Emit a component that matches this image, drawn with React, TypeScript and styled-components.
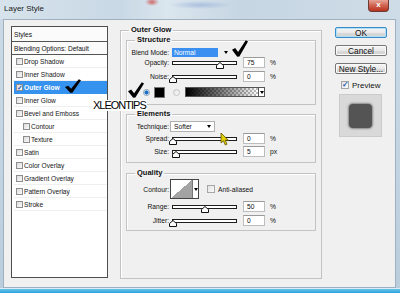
import React from "react";
import styled, { createGlobalStyle } from "styled-components";

const GlobalStyle = createGlobalStyle`
  *, *::before, *::after { box-sizing: border-box; }
  html, body { margin: 0; padding: 0; }
  body {
    width: 400px;
    height: 293px;
    overflow: hidden;
    font-family: "Liberation Sans", Arial, sans-serif;
    color: #111;
  }
  #root { width: 400px; height: 293px; }
`;

const Window = styled.div`
  position: relative;
  width: 400px;
  height: 293px;
  display: flex;
  flex-direction: column;
  background: linear-gradient(180deg, #cbdae6, #c2d3e1 60%, #b9cddd);
`;

const TitleBar = styled.div`
  height: 19px;
  flex: none;
  display: flex;
  align-items: flex-start;
  justify-content: space-between;
  padding: 0 11px 0 4px;
  background:
    radial-gradient(7px 4px at 152px 2px, rgba(205, 60, 55, 0.75), transparent),
    radial-gradient(32px 4px at 200px 5px, rgba(80, 120, 200, 0.3), transparent),
    linear-gradient(90deg, #d7e3ec, #c8d8e5 30%, #dbe6ee 42%, #c6d6e3 60%, #cedce7);
`;

const Title = styled.span`
  font-size: 8px;
  line-height: 17px;
  color: #1b1b1b;
`;

const CloseButton = styled.div`
  width: 21px;
  height: 12px;
  border: 1px solid #6e3a33;
  border-top: none;
  border-radius: 0 0 4px 4px;
  background: linear-gradient(180deg, #e7a497, #d0634f 50%, #b8321f);
  color: #fff;
  font-size: 8px;
  font-weight: bold;
  line-height: 10px;
  text-align: center;
`;

const Client = styled.div`
  flex: 1;
  margin: 0 4px 0 3px;
  display: flex;
  align-items: stretch;
  padding: 6px 8px 8px 7px;
  background: #f0f0f0;
  border: 1px solid #9fb1c1;
`;

const BottomEdge = styled.div`
  height: 5px;
  flex: none;
  background: linear-gradient(180deg, #dcebf3 0 1px, #66c4ec 1px, #2fa4da);
`;

/* ---------- styles list ---------- */

const StylesList = styled.div`
  width: 97px;
  flex: none;
  margin-bottom: 1px;
  display: flex;
  flex-direction: column;
  background: #fff;
  border: 1px solid #4e4e4e;
`;

const ListHeader = styled.div<{ $h: number }>`
  height: ${(p) => p.$h}px;
  display: flex;
  align-items: center;
  padding-left: 2px;
  font-size: 6.6px;
  border-bottom: 1px solid #555;
  background: #fbfbfb;
`;

const ListItem = styled.div<{ $indent?: boolean; $selected?: boolean }>`
  height: 13px;
  display: flex;
  align-items: center;
  margin-left: 2px;
  padding-left: ${(p) => (p.$indent ? 9 : 2)}px;
  font-size: 6.6px;
  font-weight: ${(p) => (p.$selected ? "bold" : "normal")};
  color: ${(p) => (p.$selected ? "#fff" : "#151515")};
  background: ${(p) => (p.$selected ? "#3592ee" : "#fff")};
  border-bottom: 1px solid ${(p) => (p.$selected ? "#3592ee" : "#efefef")};
`;

const Box = styled.span`
  width: 7px;
  height: 7px;
  flex: none;
  margin-right: 1px;
  border: 1px solid #8d8d8d;
  background: linear-gradient(135deg, #dcdcdc, #fafafa);
  color: #2c5bb5;
  font-size: 7px;
  line-height: 5px;
  text-align: center;
  font-weight: bold;
`;

/* ---------- groups ---------- */

const Group = styled.fieldset`
  width: 202px;
  flex: none;
  margin: 0 0 0 12px;
  padding: 2px 5px 0 5px;
  min-width: 0;
  border: 1px solid #c3c3c3;
  box-shadow: inset 1px 1px 0 #fff;
`;

const Section = styled.fieldset<{ $mt?: number }>`
  margin: ${(p) => p.$mt ?? 0}px 0 0 0;
  padding: 0;
  min-width: 0;
  border: 1px solid #c3c3c3;
  box-shadow: inset 1px 1px 0 #fff;
`;

const Legend = styled.legend<{ $ml: number }>`
  margin-left: ${(p) => p.$ml}px;
  padding: 0 2px;
  font-size: 7.5px;
  line-height: 8px;
  font-weight: bold;
  color: #111;
`;

const Rows = styled.div<{ $pt: number; $pb: number }>`
  display: flex;
  flex-direction: column;
  padding: ${(p) => p.$pt}px 0 ${(p) => p.$pb}px 0;
`;

const Row = styled.div<{ $h: number; $mt?: number }>`
  height: ${(p) => p.$h}px;
  margin-top: ${(p) => p.$mt ?? 0}px;
  display: flex;
  align-items: center;
  font-size: 6.7px;
`;

const FieldLabel = styled.span`
  width: 42px;
  flex: none;
  margin-right: 3px;
  text-align: right;
  white-space: nowrap;
`;

const DropArrow = styled.span`
  width: 0;
  height: 0;
  flex: none;
  border-left: 2.5px solid transparent;
  border-right: 2.5px solid transparent;
  border-top: 3px solid #000;
`;

const BlendField = styled.span`
  width: 46px;
  height: 9px;
  padding-left: 2px;
  margin-right: 6px;
  background: #3a8ff0;
  color: #fff;
  line-height: 9px;
`;

const SelectBox = styled.span<{ $w: number }>`
  width: ${(p) => p.$w}px;
  height: 11px;
  margin-left: -2px;
  padding: 0 3px;
  display: flex;
  align-items: center;
  justify-content: space-between;
  background: #fff;
  border: 1px solid #b0b0b0;
`;

const Track = styled.span`
  position: relative;
  width: 65px;
  height: 4px;
  flex: none;
  border: 1px solid #1e1e1e;
  background: #fff;
`;

const Thumb = styled.svg`
  position: absolute;
  top: 0;
  margin-left: -4px;
  width: 8px;
  height: 7px;
`;

const ValueBox = styled.span`
  width: 22px;
  height: 11px;
  flex: none;
  margin-left: 6px;
  padding-left: 3px;
  background: #fff;
  border: 1px solid #bdbdbd;
  border-top-color: #9a9a9a;
  line-height: 9px;
`;

const Unit = styled.span`
  margin-left: 5px;
`;

const Annotation = styled.svg<{ $w: number; $h: number; $ml?: number }>`
  width: ${(p) => p.$w}px;
  height: ${(p) => p.$h}px;
  flex: none;
  align-self: flex-end;
  margin-left: ${(p) => p.$ml ?? 0}px;
`;

const Radio = styled.span<{ $on?: boolean; $ml: number }>`
  width: 7px;
  height: 7px;
  flex: none;
  margin-left: ${(p) => p.$ml}px;
  border-radius: 50%;
  border: 1px solid ${(p) => (p.$on ? "#8aa0b4" : "#c4c4c4")};
  background: ${(p) =>
    p.$on
      ? "radial-gradient(circle, #1b6fc6 0 1.8px, #eef4fa 2.3px)"
      : "linear-gradient(135deg, #e4e4e4, #fafafa)"};
`;

const Swatch = styled.span`
  width: 11px;
  height: 11px;
  flex: none;
  margin-left: 4px;
  background: #000;
  border: 1px solid #777;
`;

const GradientBar = styled.span`
  width: 74px;
  height: 10px;
  flex: none;
  margin-left: 5px;
  border: 1px solid #555;
  background:
    linear-gradient(90deg, #000, rgba(0, 0, 0, 0)),
    repeating-conic-gradient(#bdbdbd 0 25%, #fff 0 50%) 0 0 / 4px 4px;
`;

const ArrowCell = styled.span<{ $h: number }>`
  width: 6px;
  height: ${(p) => p.$h}px;
  flex: none;
  display: flex;
  align-items: center;
  justify-content: center;
  background: #fff;
  border: 1px solid #555;
  border-left: none;
`;

const ContourBox = styled.span`
  height: 20px;
  margin-left: -2px;
  display: flex;
  border: 1px solid #444;
`;

const Curve = styled.span`
  width: 21px;
  height: 100%;
  background: linear-gradient(to bottom right, #fff 50%, #a3a3a3 50%);
`;

const CurveArrow = styled.span`
  width: 6px;
  display: flex;
  align-items: center;
  justify-content: center;
  background: #fff;
  border-left: 1px solid #777;
`;

const SmallCheck = styled.span<{ $ml: number }>`
  width: 8px;
  height: 8px;
  flex: none;
  margin: 0 3px 0 ${(p) => p.$ml}px;
  border: 1px solid #a6a6a6;
  background: linear-gradient(135deg, #e2e2e2, #fbfbfb);
  color: #2c5bb5;
  font-size: 8px;
  line-height: 6px;
  font-weight: bold;
  text-align: center;
`;

/* ---------- buttons ---------- */

const SideColumn = styled.div`
  width: 52px;
  flex: none;
  margin-left: 13px;
  display: flex;
  flex-direction: column;
`;

const Button = styled.div<{ $default?: boolean; $mt: number }>`
  height: 11px;
  margin-top: ${(p) => p.$mt}px;
  display: flex;
  align-items: center;
  justify-content: center;
  font-size: 8.3px;
  color: #111;
  border-radius: 2px;
  border: 1px solid ${(p) => (p.$default ? "#3a8cc8" : "#777")};
  box-shadow: ${(p) => (p.$default ? "inset 0 0 0 1px #aee0f8" : "inset 0 0 0 1px #fbfbfb")};
  background: linear-gradient(180deg, #f6f6f6, #e9e9e9 50%, #dadada 51%, #d2d2d2);
`;

const PreviewToggle = styled.div`
  height: 8px;
  margin-top: 7px;
  padding-left: 6px;
  display: flex;
  align-items: center;
  font-size: 8px;
`;

const PreviewBox = styled.div`
  width: 43px;
  height: 43px;
  margin: 5px 0 0 4px;
  display: flex;
  align-items: center;
  justify-content: center;
  background: #d9d9d9;
  border: 1px solid #cbcbcb;
`;

const PreviewShape = styled.div`
  width: 23px;
  height: 24px;
  border-radius: 4px;
  background: #545454;
  box-shadow: 0 0 2px 1px rgba(70, 70, 70, 0.55);
`;

/* ---------- overlays ---------- */

const Watermark = styled.div`
  position: absolute;
  left: 92px;
  top: 100px;
  padding: 0 1px;
  background: #fff;
  font-size: 11px;
  line-height: 11px;
  letter-spacing: -1px;
  color: #000;
`;

const Cursor = styled.svg`
  position: absolute;
  left: 220px;
  top: 132px;
  width: 9px;
  height: 14px;
`;

function Tick({ w, h, ml }: { w: number; h: number; ml?: number }) {
  return (
    <Annotation $w={w} $h={h} $ml={ml} viewBox="0 0 16 16" preserveAspectRatio="none">
      <path d="M0 9.2 L3.2 7.6 L6.1 11.2 L13.8 0.2 L16 1.4 L7.4 15.6 L5.2 15.8 Z" fill="#000" />
    </Annotation>
  );
}

function Slider({ value }: { value: number }) {
  return (
    <Track>
      <Thumb viewBox="0 0 8 7" style={{ left: `${value}%` }}>
        <path d="M4 0.5 L7.5 3.5 L7.5 6.5 L0.5 6.5 L0.5 3.5 Z" fill="#fff" stroke="#111" strokeWidth="1" />
      </Thumb>
    </Track>
  );
}

function SliderRow({
  label,
  value,
  pos,
  unit,
  mt
}: {
  label: string;
  value: string;
  pos: number;
  unit: string;
  mt?: number;
}) {
  return (
    <Row $h={11} $mt={mt}>
      <FieldLabel>{label}</FieldLabel>
      <Slider value={pos} />
      <ValueBox>{value}</ValueBox>
      <Unit>{unit}</Unit>
    </Row>
  );
}

const styleItems: { name: string; indent?: boolean; checked?: boolean }[] = [
  { name: "Drop Shadow" },
  { name: "Inner Shadow" },
  { name: "Outer Glow", checked: true },
  { name: "Inner Glow" },
  { name: "Bevel and Emboss" },
  { name: "Contour", indent: true },
  { name: "Texture", indent: true },
  { name: "Satin" },
  { name: "Color Overlay" },
  { name: "Gradient Overlay" },
  { name: "Pattern Overlay" },
  { name: "Stroke" }
];

export default function App() {
  return (
    <>
      <GlobalStyle />
      <Window>
        <TitleBar>
          <Title>Layer Style</Title>
          <CloseButton>x</CloseButton>
        </TitleBar>

        <Client>
          <StylesList>
            <ListHeader $h={15}>Styles</ListHeader>
            <ListHeader $h={13}>Blending Options: Default</ListHeader>
            {styleItems.map((item) => (
              <ListItem key={item.name} $indent={item.indent} $selected={item.checked}>
                <Box>{item.checked ? "✓" : ""}</Box>
                {item.name}
                {item.checked && <Tick w={16} h={14} ml={5} />}
              </ListItem>
            ))}
          </StylesList>

          <Group>
            <Legend $ml={3}>Outer Glow</Legend>

            <Section>
              <Legend $ml={8}>Structure</Legend>
              <Rows $pt={3} $pb={6}>
                <Row $h={10}>
                  <FieldLabel>Blend Mode:</FieldLabel>
                  <BlendField>Normal</BlendField>
                  <DropArrow />
                  <Tick w={16} h={17} ml={4} />
                </Row>
                <SliderRow label="Opacity:" value="75" pos={75} unit="%" />
                <SliderRow label="Noise:" value="0" pos={0} unit="%" mt={3} />
                <Row $h={12} $mt={4}>
                  <Tick w={16} h={16} ml={1} />
                  <Radio $on $ml={-1} />
                  <Swatch />
                  <Radio $ml={8} />
                  <GradientBar />
                  <ArrowCell $h={10}>
                    <DropArrow />
                  </ArrowCell>
                </Row>
              </Rows>
            </Section>

            <Section $mt={5}>
              <Legend $ml={8}>Elements</Legend>
              <Rows $pt={3} $pb={5}>
                <Row $h={11}>
                  <FieldLabel>Technique:</FieldLabel>
                  <SelectBox $w={45}>
                    Softer
                    <DropArrow />
                  </SelectBox>
                </Row>
                <SliderRow label="Spread:" value="0" pos={0} unit="%" mt={1} />
                <SliderRow label="Size:" value="5" pos={5} unit="px" mt={2} />
              </Rows>
            </Section>

            <Section $mt={6}>
              <Legend $ml={8}>Quality</Legend>
              <Rows $pt={2} $pb={4}>
                <Row $h={20}>
                  <FieldLabel>Contour:</FieldLabel>
                  <ContourBox>
                    <Curve />
                    <CurveArrow>
                      <DropArrow />
                    </CurveArrow>
                  </ContourBox>
                  <SmallCheck $ml={8} />
                  Anti-aliased
                </Row>
                <SliderRow label="Range:" value="50" pos={50} unit="%" mt={2} />
                <SliderRow label="Jitter:" value="0" pos={0} unit="%" mt={3} />
              </Rows>
            </Section>
          </Group>

          <SideColumn>
            <Button $default $mt={1}>OK</Button>
            <Button $mt={7}>Cancel</Button>
            <Button $mt={7}>New Style...</Button>
            <PreviewToggle>
              <SmallCheck $ml={0}>✓</SmallCheck>
              Preview
            </PreviewToggle>
            <PreviewBox>
              <PreviewShape />
            </PreviewBox>
          </SideColumn>
        </Client>

        <BottomEdge />

        <Watermark>XLEONTIPS</Watermark>
        <Cursor viewBox="0 0 9 14">
          <path d="M1 1 L1 11 L3.4 8.8 L5.3 13 L7 12.2 L5.2 8.2 L8.4 8.2 Z" fill="#e4d000" stroke="#5c5000" strokeWidth="0.8" />
        </Cursor>
      </Window>
    </>
  );
}
